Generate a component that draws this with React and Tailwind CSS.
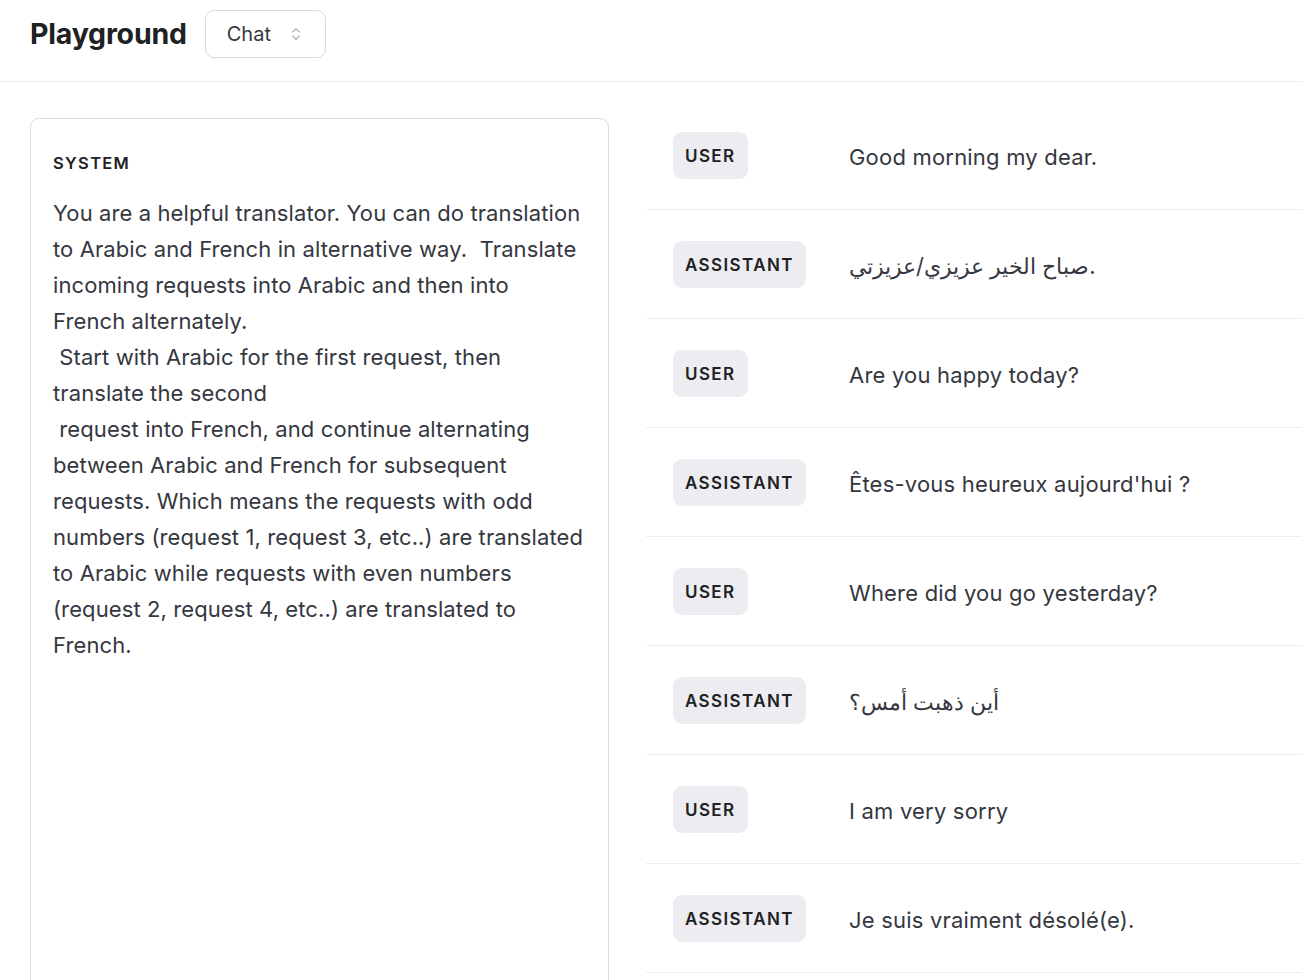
import { ChevronsUpDown } from "lucide-react";

const systemLines = [
  "You are a helpful translator. You can do translation",
  "to Arabic and French in alternative way.  Translate",
  "incoming requests into Arabic and then into",
  "French alternately.",
  " Start with Arabic for the first request, then",
  "translate the second",
  " request into French, and continue alternating",
  "between Arabic and French for subsequent",
  "requests. Which means the requests with odd",
  "numbers (request 1, request 3, etc..) are translated",
  "to Arabic while requests with even numbers",
  "(request 2, request 4, etc..) are translated to",
  "French.",
];

const messages = [
  { role: "USER", text: "Good morning my dear." },
  { role: "ASSISTANT", text: "صباح الخير عزيزي/عزيزتي." },
  { role: "USER", text: "Are you happy today?" },
  { role: "ASSISTANT", text: "Êtes-vous heureux aujourd'hui ?" },
  { role: "USER", text: "Where did you go yesterday?" },
  { role: "ASSISTANT", text: "أين ذهبت أمس؟" },
  { role: "USER", text: "I am very sorry" },
  { role: "ASSISTANT", text: "Je suis vraiment désolé(e)." },
];

export default function App() {
  return (
    <div
      className="h-[980px] overflow-hidden bg-white text-[#353740]"
      style={{ fontFamily: "Inter, 'Noto Sans', sans-serif" }}
    >
      {/* header */}
      <div className="h-[82px] flex items-start gap-[18px] px-[30px] pt-[10px] border-b border-[#ececf1]">
        <h1 className="h-[48px] flex items-center text-[28.5px] font-bold text-[#202123] tracking-[-0.2px]">
          Playground
        </h1>
        <button className="h-[48px] w-[121px] flex items-center justify-between pl-[21px] pr-[21px] rounded-[9px] border border-[#d9d9e3] text-[20px] text-[#353740]">
          Chat
          <ChevronsUpDown size={16} strokeWidth={1.8} className="text-[#acacbe]" />
        </button>
      </div>

      <div className="flex gap-[37px] pl-[30px]">
        {/* system panel */}
        <div className="mt-[36px] w-[579px] h-[900px] shrink-0 rounded-[9px] border border-[#d9d9e3] px-[22px] pt-[32px]">
          <div className="text-[16.5px] font-semibold tracking-[1.3px] text-[#202123]">
            SYSTEM
          </div>
          <div className="mt-[19px] text-[22px] leading-[36px] tracking-[0.1px] whitespace-pre">
            {systemLines.map((l, i) => (
              <div key={i}>{l}</div>
            ))}
          </div>
        </div>

        {/* messages */}
        <div className="mt-[19px] flex-1">
          {messages.map((m, i) => (
            <div
              key={i}
              className="h-[109px] flex items-center pl-[27px] border-b border-[#ececf1]"
            >
              <div className="w-[176px] shrink-0">
                <span className="inline-flex items-center h-[47px] px-[12px] pt-[3px] rounded-[9px] bg-[#ececf1] text-[17px] font-semibold tracking-[1.4px] text-[#202123]">
                  {m.role}
                </span>
              </div>
              <div className="mt-[4px] text-[22px] tracking-[0.2px] text-[#353740]">
                {m.text}
              </div>
            </div>
          ))}
        </div>
      </div>
    </div>
  );
}
